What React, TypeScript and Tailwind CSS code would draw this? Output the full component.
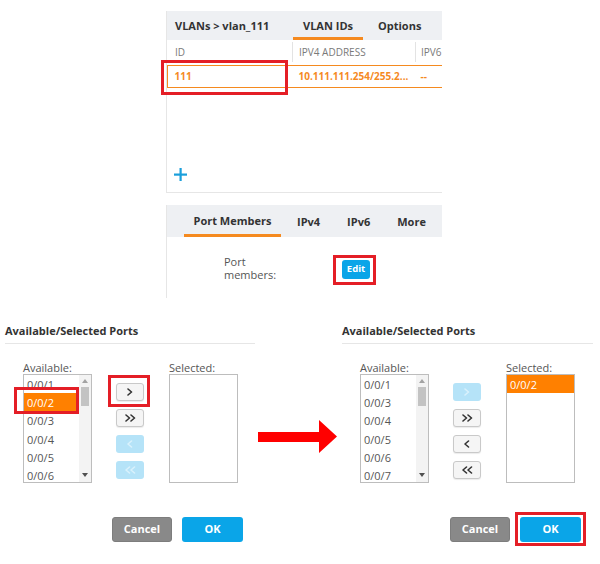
import React from "react";

const RED = "border-[3px] border-[#e41e26]";

function PlusIcon() {
  return (
    <svg width="13" height="13" viewBox="0 0 13 13">
      <rect x="5.5" y="0" width="2.2" height="13" fill="#1a9fdb" />
      <rect x="0" y="5.5" width="13" height="2.2" fill="#1a9fdb" />
    </svg>
  );
}

function Chevrons({ dir, count, color }: { dir: "r" | "l"; count: number; color: string }) {
  const w = count === 1 ? 6 : 11;
  const pts = (ox: number) =>
    dir === "r" ? `${ox + 1},1 ${ox + 4.5},4 ${ox + 1},7` : `${ox + 4.5},1 ${ox + 1},4 ${ox + 4.5},7`;
  return (
    <svg width={w} height="8" viewBox={`0 0 ${w} 8`}>
      <polyline points={pts(0)} fill="none" stroke={color} strokeWidth="1.6" strokeLinecap="round" strokeLinejoin="round" />
      {count === 2 && (
        <polyline points={pts(5)} fill="none" stroke={color} strokeWidth="1.6" strokeLinecap="round" strokeLinejoin="round" />
      )}
    </svg>
  );
}

function ListBox({
  items,
  selected,
  scroll,
}: {
  items: string[];
  selected: number;
  scroll: boolean;
}) {
  return (
    <div className="w-[69px] h-[109px] border border-[#bdbdbd] bg-white flex overflow-hidden">
      <div className="flex-1 flex flex-col">
        {items.map((it, i) => (
          <div
            key={it}
            className={
              "h-[18.3px] shrink-0 flex items-center pl-[3px] text-[11px] leading-none " +
              (i === selected ? "bg-[#ff8000] text-white" : "text-[#555]")
            }
          >
            {it}
          </div>
        ))}
      </div>
      {scroll && (
        <div className="w-[12px] bg-[#f3f3f3] flex flex-col items-center">
          <div className="h-[12px] flex items-center justify-center">
            <svg width="6" height="4" viewBox="0 0 6 4">
              <polygon points="3,0 6,4 0,4" fill="#a3a3a3" />
            </svg>
          </div>
          <div className="w-[8px] h-[19px] bg-[#c3c3c3]" />
          <div className="flex-1" />
          <div className="h-[14px] flex items-center justify-center">
            <svg width="6" height="4" viewBox="0 0 6 4">
              <polygon points="0,0 6,0 3,4" fill="#505050" />
            </svg>
          </div>
        </div>
      )}
    </div>
  );
}

function MoveBtn({ dir, count, disabled }: { dir: "r" | "l"; count: number; disabled?: boolean }) {
  return (
    <div
      className={
        "w-[28px] h-[18px] rounded-[3px] flex items-center justify-center " +
        (disabled
          ? "bg-[#b5e3f8]"
          : "bg-[#f5f5f5] border border-[#c9c9c9] shadow-[0_1px_1px_rgba(0,0,0,0.08)]")
      }
    >
      <Chevrons dir={dir} count={count} color={disabled ? "#d9f1fc" : "#333333"} />
    </div>
  );
}

function Dialog({
  available,
  availSel,
  selectedItems,
  disabled,
  children,
}: {
  available: string[];
  availSel: number;
  selectedItems: string[];
  disabled: boolean[];
  children?: React.ReactNode;
}) {
  const btns: { dir: "r" | "l"; count: number }[] = [
    { dir: "r", count: 1 },
    { dir: "r", count: 2 },
    { dir: "l", count: 1 },
    { dir: "l", count: 2 },
  ];
  return (
    <div className="relative w-full">
      <div className="h-[24px] border-b border-[#e6e6e6] flex items-center text-[11px] font-bold text-[#333]">
        Available/Selected Ports
      </div>
      <div className="flex pl-[18px] mt-[18px]">
        <div className="flex flex-col">
          <div className="h-[12px] text-[11px] leading-[12px] text-[#555]">Available:</div>
          <ListBox items={available} selected={availSel} scroll={true} />
        </div>
        <div className="ml-[24px] pt-[21px] flex flex-col gap-[8px]">
          {btns.map((b, i) => (
            <MoveBtn key={i} dir={b.dir} count={b.count} disabled={disabled[i]} />
          ))}
        </div>
        <div className="ml-[25px] flex flex-col">
          <div className="h-[12px] text-[11px] leading-[12px] text-[#555]">Selected:</div>
          <ListBox items={selectedItems} selected={0} scroll={false} />
        </div>
      </div>
      <div className="flex justify-end gap-[10px] pr-[12px] mt-[34px]">
        <div className="w-[60px] h-[25px] rounded-[3px] bg-[#898989] border border-[#7d7d7d] text-white text-[11px] font-bold flex items-center justify-center">
          Cancel
        </div>
        <div className="w-[61px] h-[25px] rounded-[3px] bg-[#0aa5e8] text-white text-[11px] font-bold flex items-center justify-center">
          OK
        </div>
      </div>
      {children}
    </div>
  );
}

export default function App() {
  return (
    <div className="relative w-[600px] h-[564px] bg-white overflow-hidden font-['Open_Sans',sans-serif]">
      {/* Top panels */}
      <div className="pt-[11px] pl-[166px]">
        <div className="w-[276px] border-l border-b border-[#e6e6e6] overflow-hidden">
          <div className="h-[29px] bg-[#eef0f3] flex items-stretch text-[11px] font-bold text-[#333] whitespace-nowrap">
            <div className="shrink-0 pl-[8px] w-[126px] flex items-center pt-[2px]">VLANs &gt; vlan_111</div>
            <div className="shrink-0 w-[70px] flex items-center justify-center border-b-[3px] border-[#f58a1f] pt-[4px]">
              VLAN IDs
            </div>
            <div className="shrink-0 ml-[15px] flex items-center pt-[2px]">Options</div>
          </div>
          <div className="h-[22px] flex text-[10px] text-[#7a7a7a] whitespace-nowrap pt-[2px]">
            <div className="shrink-0 w-[126px] pl-[8px] border-r border-[#e3e3e3] flex items-center">ID</div>
            <div className="shrink-0 w-[123px] pl-[6px] border-r border-[#e3e3e3] flex items-center">IPV4 ADDRESS</div>
            <div className="shrink-0 pl-[5px] flex items-center">IPV6 ADDRESS</div>
          </div>
          <div className="mt-[3px] h-[23px] flex border-y-[1.5px] border-l-[1.5px] border-[#f58a1f] text-[10px] font-bold text-[#f58a1f] whitespace-nowrap">
            <div className="shrink-0 w-[124.5px] pl-[6.5px] flex items-center">111</div>
            <div className="shrink-0 w-[123px] pl-[6px] flex items-center">10.111.111.254/255.2...</div>
            <div className="shrink-0 pl-[5px] flex items-center">--</div>
          </div>
          <div className="h-[80px]" />
          <div className="pl-[7px] h-[13px] flex items-center">
            <PlusIcon />
          </div>
          <div className="h-[11px]" />
        </div>
        <div className="mt-[12px] w-[276px] border-l border-[#e6e6e6] h-[93px]">
          <div className="h-[32px] bg-[#eef0f3] flex items-stretch text-[11px] font-bold text-[#333] whitespace-nowrap">
            <div className="shrink-0 ml-[17px] w-[97px] flex items-center justify-center border-b-[3px] border-[#f58a1f] pt-[4px]">
              Port Members
            </div>
            <div className="shrink-0 ml-[16px] flex items-center pt-[2px]">IPv4</div>
            <div className="shrink-0 ml-[27px] flex items-center pt-[2px]">IPv6</div>
            <div className="shrink-0 ml-[27px] flex items-center pt-[2px]">More</div>
          </div>
          <div className="flex pt-[18px]">
            <div className="ml-[57px] w-[118px] text-[11px] leading-[13px] text-[#555]">
              Port
              <br />
              members:
            </div>
            <div className="mt-[5px] w-[28px] h-[19px] rounded-[3px] bg-[#0aa5e8] text-white text-[9.5px] font-bold flex items-center justify-center">
              Edit
            </div>
          </div>
        </div>
      </div>

      {/* Bottom dialogs */}
      <div className="mt-[22px] flex pl-[5px]">
        <div className="w-[250px]">
          <Dialog
            available={["0/0/1", "0/0/2", "0/0/3", "0/0/4", "0/0/5", "0/0/6"]}
            availSel={1}
            selectedItems={[]}
            disabled={[false, false, true, true]}
          >
            <div className={"absolute left-[9px] top-[67px] w-[65px] h-[27px] " + RED} />
            <div className={"absolute left-[103px] top-[55px] w-[42px] h-[32px] " + RED} />
          </Dialog>
        </div>
        <div className="ml-[3px] w-[79px] pt-[100px]">
          <svg width="79" height="33" viewBox="0 0 79 33">
            <polygon points="0,12 61,12 61,0 79,16.5 61,33 61,22 0,22" fill="#ff0000" />
          </svg>
        </div>
        <div className="ml-[5px] w-[251px]">
          <Dialog
            available={["0/0/1", "0/0/3", "0/0/4", "0/0/5", "0/0/6", "0/0/7"]}
            availSel={-1}
            selectedItems={["0/0/2"]}
            disabled={[true, false, false, false]}
          >
            <div className={"absolute left-[173px] top-[192px] w-[71px] h-[34px] " + RED} />
          </Dialog>
        </div>
      </div>

      {/* Overlay highlight boxes on top panels */}
      <div className={"absolute left-[161px] top-[60px] w-[127px] h-[35px] " + RED} />
      <div className={"absolute left-[333px] top-[255px] w-[43px] h-[30px] " + RED} />
    </div>
  );
}
